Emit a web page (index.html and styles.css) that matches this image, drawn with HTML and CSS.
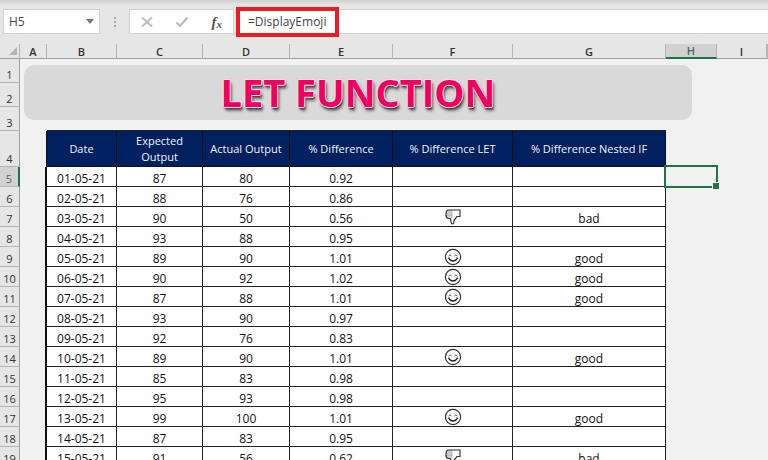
FILE: index.html
```html
<!DOCTYPE html>
<html lang="en">
<head>
    <meta charset="UTF-8">
    <meta name="viewport" content="width=device-width, initial-scale=1.0">
    <title>LET Function</title>
    <link rel="stylesheet" href="styles.css">
</head>
<body>
    <!-- icons used more than once -->
    <svg class="symbols" aria-hidden="true">
        <symbol id="smile" viewBox="0 0 18 18">
            <circle cx="9" cy="9" r="7.6" fill="#fff" stroke="#333" stroke-width="1.2"/>
            <path d="M4.6 8q1.5-2.2 3 0M10.4 8q1.5-2.2 3 0" fill="none" stroke="#555" stroke-width="1"/>
            <path d="M5 11q4 4 8 0" fill="none" stroke="#222" stroke-width="1.4"/>
            <path d="M3.9 10.2h2M12.1 10.2h2" stroke="#555" stroke-width="1.4"/>
        </symbol>
        <symbol id="thumb" viewBox="0 0 18 18">
            <path d="M8 2H4.500Q2.500 2 2 5v2.500Q2 10.500 5 10.500h1.500L7 14q.3 2 1.500 2 1.400 0 1.300-2-.1-2 1.700-3.500L13 8.500h3V2z" fill="#fff"/>
            <path d="M8 2H4.500Q2.500 2 2 5v2.500Q2 10 4 10h4z" fill="#cfd6da"/>
            <path d="M2.300 4.700H8M2.300 7.400H8M8 2v8" fill="none" stroke="#a9b4ba" stroke-width=".8"/>
            <path d="M8 2H4.500Q2.500 2 2 5v2.500Q2 10.500 5 10.500h1.500L7 14q.3 2 1.500 2 1.400 0 1.300-2-.1-2 1.700-3.500L13 8.500h3V2H8" fill="none" stroke="#333" stroke-width="1.200"/>
        </symbol>
    </svg>

    <div class="formula-bar">
        <div class="name-box">
            <input class="name-input" type="text" value="H5" aria-label="Name box">
            <button class="name-toggle" type="button" aria-label="Show names">
                <svg width="8" height="5" viewBox="0 0 8 5"><path d="M0 0h8L4 5z" fill="#777"/></svg>
            </button>
        </div>
        <div class="grip"><i></i><i></i><i></i></div>
        <div class="tools">
            <button type="button" aria-label="Cancel">
                <svg width="12" height="12" viewBox="0 0 12 12"><path d="M1 1.500l10 9M11 1.500l-10 9" stroke="#bbb" stroke-width="1.800"/></svg>
            </button>
            <button type="button" aria-label="Enter">
                <svg width="14" height="12" viewBox="0 0 14 12"><path d="M1.500 6.500L5 10l7.500-8.500" fill="none" stroke="#bbb" stroke-width="2.200"/></svg>
            </button>
            <button class="fx" type="button" aria-label="Insert function">f<sub>x</sub></button>
        </div>
        <div class="formula">
            <input class="formula-input" type="text" value="=DisplayEmoji" aria-label="Formula">
            <div class="highlight"></div>
        </div>
    </div>

    <main class="sheet">
        <table class="grid">
            <colgroup>
                <col class="col-num"><col class="col-a"><col class="col-b"><col class="col-c"><col class="col-d"><col class="col-e"><col class="col-f"><col class="col-g"><col class="col-h"><col class="col-i"><col>
            </colgroup>
            <thead>
                <tr class="letters">
                    <th class="corner"><svg width="8" height="8" viewBox="0 0 8 8"><path d="M8 0v8H0z" fill="#b5b5b5"/></svg></th>
                    <th>A</th><th>B</th><th>C</th><th>D</th><th>E</th><th>F</th><th>G</th><th class="active">H</th><th>I</th><th></th>
                </tr>
            </thead>
            <tbody>
                <tr class="blank"><th>1</th><td class="anchor" colspan="10"><h1 class="banner">LET FUNCTION</h1></td></tr>
                <tr class="blank"><th>2</th><td colspan="10"></td></tr>
                <tr class="blank"><th>3</th><td></td><td class="edge" colspan="6"></td><td colspan="3"></td></tr>
                <tr class="heads"><th>4</th><td></td><td>Date</td><td>Expected Output</td><td>Actual Output</td><td>% Difference</td><td>% Difference LET</td><td>% Difference Nested IF</td><td></td></tr>
                <tr class="row"><th class="active">5</th><td></td><td>01-05-21</td><td>87</td><td>80</td><td>0.92</td><td></td><td></td><td class="selected"><div class="cursor"></div></td></tr>
                <tr class="row"><th>6</th><td></td><td>02-05-21</td><td>88</td><td>76</td><td>0.86</td><td></td><td></td></tr>
                <tr class="row"><th>7</th><td></td><td>03-05-21</td><td>90</td><td>50</td><td>0.56</td><td><svg class="emoji"><use href="#thumb"/></svg></td><td>bad</td></tr>
                <tr class="row"><th>8</th><td></td><td>04-05-21</td><td>93</td><td>88</td><td>0.95</td><td></td><td></td></tr>
                <tr class="row"><th>9</th><td></td><td>05-05-21</td><td>89</td><td>90</td><td>1.01</td><td><svg class="emoji"><use href="#smile"/></svg></td><td>good</td></tr>
                <tr class="row"><th>10</th><td></td><td>06-05-21</td><td>90</td><td>92</td><td>1.02</td><td><svg class="emoji"><use href="#smile"/></svg></td><td>good</td></tr>
                <tr class="row"><th>11</th><td></td><td>07-05-21</td><td>87</td><td>88</td><td>1.01</td><td><svg class="emoji"><use href="#smile"/></svg></td><td>good</td></tr>
                <tr class="row"><th>12</th><td></td><td>08-05-21</td><td>93</td><td>90</td><td>0.97</td><td></td><td></td></tr>
                <tr class="row"><th>13</th><td></td><td>09-05-21</td><td>92</td><td>76</td><td>0.83</td><td></td><td></td></tr>
                <tr class="row"><th>14</th><td></td><td>10-05-21</td><td>89</td><td>90</td><td>1.01</td><td><svg class="emoji"><use href="#smile"/></svg></td><td>good</td></tr>
                <tr class="row"><th>15</th><td></td><td>11-05-21</td><td>85</td><td>83</td><td>0.98</td><td></td><td></td></tr>
                <tr class="row"><th>16</th><td></td><td>12-05-21</td><td>95</td><td>93</td><td>0.98</td><td></td><td></td></tr>
                <tr class="row"><th>17</th><td></td><td>13-05-21</td><td>99</td><td>100</td><td>1.01</td><td><svg class="emoji"><use href="#smile"/></svg></td><td>good</td></tr>
                <tr class="row"><th>18</th><td></td><td>14-05-21</td><td>87</td><td>83</td><td>0.95</td><td></td><td></td></tr>
                <tr class="row"><th>19</th><td></td><td>15-05-21</td><td>91</td><td>56</td><td>0.62</td><td><svg class="emoji"><use href="#thumb"/></svg></td><td>bad</td></tr>
            </tbody>
        </table>
    </main>
</body>
</html>
```
FILE: styles.css
```css
* {
    box-sizing: border-box;
}

body {
    margin: 0;
    height: 100vh;
    display: flex;
    flex-direction: column;
    overflow: hidden;
    background: #f1f1f1;
    color: #111;
    font-family: "Open Sans", "Noto Sans", sans-serif;
    font-size: 12px;
}

button,
input {
    margin: 0;
    padding: 0;
    border: none;
    background: none;
    font: inherit;
    color: inherit;
}

.symbols {
    position: absolute;
    width: 0;
    height: 0;
}

/* formula bar */
.formula-bar {
    display: flex;
    flex: none;
    height: 44px;
    padding: 9px 0 9px 3px;
    background: linear-gradient(#cfcfcf, #e6e6e6 5px);
}

.name-box,
.tools,
.formula {
    display: flex;
    align-items: center;
    height: 25px;
    background: #fff;
    border: 1px solid #d2d2d2;
}

.name-box {
    width: 97px;
    padding: 0 5px;
}

.name-input {
    flex: 1;
    min-width: 0;
    color: #444;
}

.name-toggle {
    display: flex;
}

.grip {
    display: flex;
    flex-direction: column;
    justify-content: center;
    align-items: center;
    gap: 2px;
    width: 29px;
}

.grip i {
    width: 2px;
    height: 2px;
    background: #aaa;
}

.tools {
    width: 105px;
    justify-content: space-between;
    padding: 0 11px;
}

.tools button {
    display: flex;
    align-items: center;
}

.tools .fx {
    color: #555;
    font: italic bold 15px/16px "Liberation Serif", serif;
}

.fx sub {
    font-size: 11px;
    line-height: 11px;
    align-self: flex-end;
}

.formula {
    position: relative;
    flex: 1;
    margin-left: 2px;
    border-right: none;
}

.formula-input {
    width: 100%;
    padding-left: 11px;
    color: #444;
}

.highlight {
    position: absolute;
    top: -3px;
    left: -1px;
    width: 103px;
    height: 30px;
    border: 4px solid #ed1c24;
    pointer-events: none;
}

/* sheet */
.sheet {
    flex: 1;
    min-height: 0;
    overflow: hidden;
}

.grid {
    width: 100%;
    table-layout: fixed;
    border-collapse: separate;
    border-spacing: 0;
}

.col-num { width: 20px; }
.col-a { width: 27px; }
.col-b { width: 70px; }
.col-c { width: 86px; }
.col-d { width: 87px; }
.col-e { width: 103px; }
.col-f { width: 120px; }
.col-g { width: 153px; }
.col-h { width: 51px; }
.col-i { width: 50px; }

.grid th,
.grid td {
    padding: 0;
    text-align: center;
}

.grid th {
    background: #e6e6e6;
    color: #333;
    font-size: 11px;
    line-height: 13px;
}

.letters th {
    height: 15px;
    font-weight: 600;
    border-right: 1px solid #b5b5b5;
    border-bottom: 1px solid #9f9f9f;
}

.letters .corner svg {
    display: block;
    margin-left: 9px;
}

.grid .letters .active {
    background: #d2d2d2;
    color: #477060;
    border-bottom: 2px solid #217346;
}

.grid tbody th {
    padding-bottom: 1px;
    vertical-align: bottom;
    font-weight: 400;
    border-right: 1px solid #9f9f9f;
    border-bottom: 1px solid #b5b5b5;
}

.grid tbody .active {
    background: #d2d2d2;
    color: #477060;
    border-right: 2px solid #217346;
}

.blank th {
    height: 24px;
}

.grid .edge {
    border-bottom: 1px solid #222;
}

.anchor {
    position: relative;
}

/* title shape floating over rows 1-3 */
.banner {
    position: absolute;
    top: 6px;
    left: 4px;
    width: 668px;
    height: 55px;
    margin: 0;
    border-radius: 10px;
    background: #d9d9d9;
    color: #f2005f;
    font-size: 38px;
    font-weight: 700;
    line-height: 55px;
    text-align: center;
    text-shadow: 1px 0 #fbe3ea, -1px 0 #fbe3ea, 0 1px #fbe3ea, 0 -1px #fbe3ea, 1px 2px 2px #333, 2px 4px 3px #777;
}

.heads th {
    height: 36px;
}

.heads td:nth-child(n+3):nth-child(-n+8) {
    padding: 0 12px;
    background: #002060;
    color: #f4f4f4;
    font-size: 11px;
    line-height: 16px;
    border-right: 1px solid #111;
    border-bottom: 1px solid #111;
}

.heads td:nth-child(n+5):nth-child(-n+8) {
    white-space: nowrap;
    padding: 0;
}

.heads td:nth-child(2) {
    border-right: 1px solid #111;
}

.row td:nth-child(2) {
    border-right: 2px solid #111;
}

.row th {
    height: 20px;
}

.row td:nth-child(n+3):nth-child(-n+8) {
    padding-top: 4px;
    background: #fff;
    line-height: 15px;
    border-right: 1px solid #222;
    border-bottom: 1px solid #222;
}

.emoji {
    display: block;
    width: 18px;
    height: 18px;
    margin: -3px auto 0;
}

.selected {
    position: relative;
}

/* selection frame with its fill handle */
.cursor {
    position: absolute;
    inset: -2px -1px -1px -2px;
    border: 2px solid #217346;
}

.cursor::after {
    content: "";
    position: absolute;
    right: -3px;
    bottom: -3px;
    width: 6px;
    height: 6px;
    background: #217346;
    border: 1px solid #f1f1f1;
    border-width: 1px 0 0 1px;
}
```
